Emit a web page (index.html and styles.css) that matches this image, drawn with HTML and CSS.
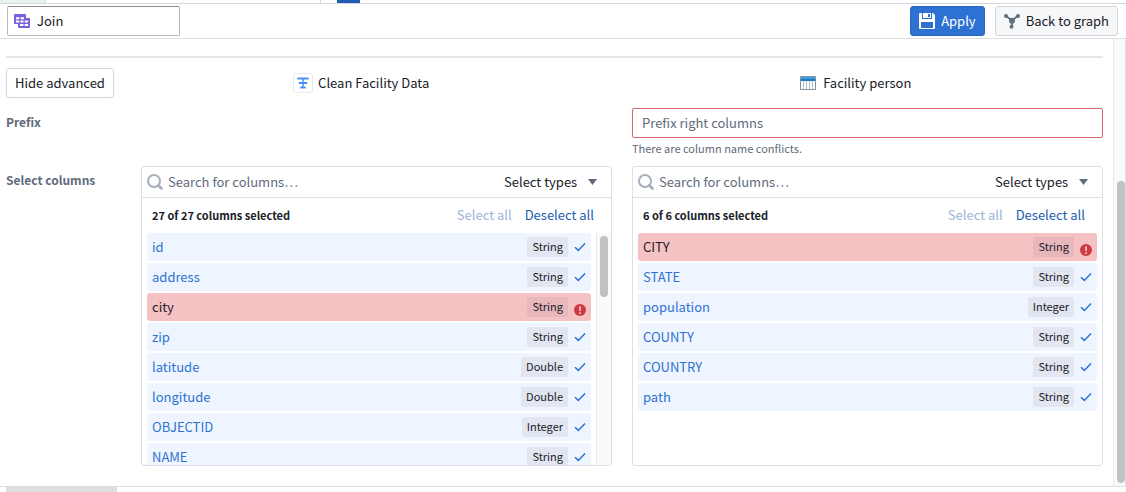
FILE: index.html
```html
<!DOCTYPE html>
<html lang="en">
<head>
<meta charset="utf-8">
<title>Join</title>
<link rel="stylesheet" href="styles.css">
</head>
<body>
<svg class="symbols" aria-hidden="true">
  <symbol id="tick" viewBox="0 0 12 10"><path d="M1 5.2 4.3 8.4 11 1.4" fill="none" stroke="currentColor" stroke-width="1.5"/></symbol>
  <symbol id="error" viewBox="0 0 12 12"><circle cx="6" cy="6" r="6" fill="#cd3b40"/><path d="M6 2.3v4.6M6 8.2v1.7" stroke="#f5c2c4" stroke-width="1.7"/></symbol>
  <symbol id="search" viewBox="0 0 16 16"><circle cx="7" cy="7" r="6" fill="none" stroke="currentColor" stroke-width="2"/><path d="m11.5 11.5 3 3" stroke="currentColor" stroke-width="2.6" stroke-linecap="round"/></symbol>
</svg>
<div class="strip"><span class="strip-tab"></span><span class="strip-line"></span><span class="strip-active"></span></div>
<header class="toolbar">
  <label class="name-box">
    <svg width="16" height="14" viewBox="0 0 16 14"><path d="M1 0h10a1 1 0 0 1 1 1v3h3a1 1 0 0 1 1 1v8a1 1 0 0 1-1 1H5a1 1 0 0 1-1-1v-3H1a1 1 0 0 1-1-1V1a1 1 0 0 1 1-1z" fill="#7961db"/><path d="M2 3.2h3.3v2H2zM6.5 3.2H10v2H6.5zM2 6.4h3.3v2H2zM6.5 6.4h3v2h-3zM10.7 6.4H14v2h-3.3zM6 9.9h3.5v2H6zM10.7 9.9H14v2h-3.3z" fill="#fff"/></svg>
    <input type="text" value="Join" aria-label="Name">
  </label>
  <button class="btn btn-primary" type="button">
    <svg width="16" height="16" viewBox="0 0 16 16"><path fill="#fff" fill-rule="evenodd" d="M1 0h2v6h10V0h1l2 2v13a1 1 0 0 1-1 1H1a1 1 0 0 1-1-1V1a1 1 0 0 1 1-1zM2 9v6h12V9zM4 0h8v5H4zM9 1v3h2V1z"/></svg>
    Apply
  </button>
  <button class="btn btn-muted" type="button">
    <svg width="16" height="16" viewBox="0 0 16 16" fill="#5c7080"><path d="m2 3 6 4.5L14 2.700M8 8v6" fill="none" stroke="#5c7080" stroke-width="1.8"/><circle cx="2" cy="3" r="2"/><circle cx="14" cy="3" r="2"/><circle cx="8" cy="7.800" r="3"/><circle cx="7.500" cy="13.800" r="2"/></svg>
    Back to graph
  </button>
</header>
<div class="viewport">
  <main class="content">
    <hr>
    <div class="sources">
      <button class="btn" type="button">Hide advanced</button>
      <div class="source">
        <span class="source-badge"><svg width="12" height="12" viewBox="0 0 12 12"><path d="M1 1.500h10M2.500 6h7M4 10.500h4" fill="none" stroke="#4a90f5" stroke-width="1.800" stroke-linecap="round"/><path d="M6 1.500v9" stroke="#4a90f5" stroke-width="1.500"/></svg></span>
        Clean Facility Data
      </div>
      <div class="source person">
        <svg width="16" height="14" viewBox="0 0 16 14"><path d="M.5.5h15v13H.5z" fill="#fff" stroke="#8a9299"/><path d="M1 1h14v2H1z" fill="#39a0e6"/><path d="M1 3h14v2H1z" fill="#1d78c4"/><path d="M3.500 5v8M6.500 5v8M9.500 5v8M12.500 5v8" stroke="#a9bfd2"/></svg>
        Facility person
      </div>
    </div>
    <div class="form">
      <label class="form-label" for="prefix">Prefix</label>
      <div class="prefix">
        <input id="prefix" type="text" placeholder="Prefix right columns">
        <p>There are column name conflicts.</p>
      </div>
      <span class="form-label">Select columns</span>
      <section class="panel">
        <div class="panel-search">
          <svg width="16" height="16"><use href="#search"/></svg>
          <input type="text" placeholder="Search for columns…" aria-label="Search left columns">
          <label class="types"><select aria-label="Left column types"><option>Select types</option></select></label>
        </div>
        <div class="panel-actions"><strong>27 of 27 columns selected</strong><button type="button" disabled>Select all</button><button type="button">Deselect all</button></div>
        <div class="list">
          <div class="rows">
            <button class="row" type="button"><span>id</span><em>String</em><svg><use href="#tick"/></svg></button>
            <button class="row" type="button"><span>address</span><em>String</em><svg><use href="#tick"/></svg></button>
            <button class="row conflict" type="button"><span>city</span><em>String</em><svg><use href="#error"/></svg></button>
            <button class="row" type="button"><span>zip</span><em>String</em><svg><use href="#tick"/></svg></button>
            <button class="row" type="button"><span>latitude</span><em>Double</em><svg><use href="#tick"/></svg></button>
            <button class="row" type="button"><span>longitude</span><em>Double</em><svg><use href="#tick"/></svg></button>
            <button class="row" type="button"><span>OBJECTID</span><em>Integer</em><svg><use href="#tick"/></svg></button>
            <button class="row" type="button"><span>NAME</span><em>String</em><svg><use href="#tick"/></svg></button>
          </div>
          <div class="list-track"><div class="thumb"></div></div>
        </div>
      </section>
      <section class="panel">
        <div class="panel-search">
          <svg width="16" height="16"><use href="#search"/></svg>
          <input type="text" placeholder="Search for columns…" aria-label="Search right columns">
          <label class="types"><select aria-label="Right column types"><option>Select types</option></select></label>
        </div>
        <div class="panel-actions"><strong>6 of 6 columns selected</strong><button type="button" disabled>Select all</button><button type="button">Deselect all</button></div>
        <div class="list">
          <div class="rows">
            <button class="row conflict" type="button"><span>CITY</span><em>String</em><svg><use href="#error"/></svg></button>
            <button class="row" type="button"><span>STATE</span><em>String</em><svg><use href="#tick"/></svg></button>
            <button class="row" type="button"><span>population</span><em>Integer</em><svg><use href="#tick"/></svg></button>
            <button class="row" type="button"><span>COUNTY</span><em>String</em><svg><use href="#tick"/></svg></button>
            <button class="row" type="button"><span>COUNTRY</span><em>String</em><svg><use href="#tick"/></svg></button>
            <button class="row" type="button"><span>path</span><em>String</em><svg><use href="#tick"/></svg></button>
          </div>
        </div>
      </section>
    </div>
  </main>
  <div class="page-track"><div class="thumb"></div></div>
</div>
<footer class="bottom"><span></span></footer>
</body>
</html>
```

FILE: styles.css
```css
* { box-sizing: border-box; }

body {
  margin: 0;
  height: 100vh;
  display: flex;
  flex-direction: column;
  overflow: hidden;
  background: #fff;
  color: #182026;
  font: 13px/18px "Noto Sans CJK SC", "Noto Sans", sans-serif;
}

button, input, select { font: inherit; color: inherit; }
button { cursor: pointer; }
svg { flex: none; display: block; }
.symbols { position: absolute; width: 0; height: 0; }

/* Edge of the pane above */
.strip { display: flex; flex: none; height: 4px; border-bottom: 1px solid #d5d8dd; }
.strip-tab { width: 46px; background: #e6f4f1; border-right: 1px solid #b9ddd5; }
.strip-line { width: 275px; border-right: 1px solid #d5d8dd; }
.strip-active { width: 23px; margin-left: 16px; background: #215db0; }

.toolbar {
  display: flex;
  flex: none;
  align-items: center;
  gap: 10px;
  height: 35px;
  padding: 0 8px 0 7px;
  border-bottom: 1px solid #dcdfe8;
}
.name-box {
  display: flex;
  align-items: center;
  gap: 7px;
  width: 173px;
  height: 30px;
  margin-right: auto;
  padding: 0 6px;
  border: 1px solid #b8b8b8;
  border-top-color: #8c8c8c;
  border-radius: 2px;
}
.name-box input { width: 100%; min-width: 0; padding: 0; border: 0; outline: 0; background: none; }

.btn {
  display: flex;
  align-items: center;
  gap: 6px;
  height: 30px;
  padding: 0 8px;
  border: 1px solid #d5d6d8;
  border-radius: 3px;
  background: #fff;
  white-space: nowrap;
}
.btn-primary { background: #2d72d2; border-color: #2767c0; color: #fff; }
.btn-muted { background: #f6f7f9; }

.viewport { display: flex; flex: 1; min-height: 0; border-right: 1px solid #dcdfe8; }
.content { flex: 1; min-width: 0; padding: 17px 10px 0 6px; overflow: hidden; }
.content hr { height: 2px; margin: 0 0 10px; border: 0; background: #e6e6e6; }

.page-track {
  display: flex;
  flex-direction: column;
  justify-content: flex-end;
  width: 12px;
  padding: 0 0 3px 3px;
  border-left: 1px solid #e8e8e8;
  background: #fafafa;
}
.thumb { border-radius: 4px; background: #c1c1c1; }
.page-track .thumb { height: 68%; }

.sources { display: flex; align-items: center; }
.source { display: flex; flex: 1; align-items: center; justify-content: center; gap: 5px; }
.person { gap: 7px; }
.source-badge {
  display: flex;
  align-items: center;
  justify-content: center;
  width: 20px;
  height: 20px;
  border: 1px solid #e8eaed;
  border-radius: 3px;
}

.form {
  display: grid;
  grid-template-columns: 115px minmax(0, 1fr) minmax(0, 1fr);
  column-gap: 20px;
  row-gap: 8px;
  margin-top: 10px;
}
.form-label { padding-top: 5px; font-size: 12px; font-weight: 700; color: #5f6b7c; }
.prefix { grid-column: 3; }
.prefix input {
  display: block;
  width: 100%;
  height: 30px;
  padding: 0 9px 2px;
  border: 1px solid #d9666a;
  border-radius: 2px;
  outline: 0;
}
.prefix p { margin: 1px 0; font-size: 11px; line-height: 18px; color: #5f6b7c; }
input::placeholder { color: #5f6b7c; opacity: 1; }

.panel { border: 1px solid #dce0e5; border-radius: 3px; overflow: hidden; }
.panel-search {
  display: flex;
  align-items: center;
  gap: 5px;
  height: 31px;
  padding: 0 14px 0 5px;
  border-bottom: 1px solid #dce0e5;
  color: #a7b0be;
}
.panel-search input { flex: 1; min-width: 0; padding: 0; border: 0; outline: 0; background: none; color: #182026; }
.types { display: flex; align-items: center; gap: 10px; color: #182026; }
.types::after { content: ""; width: 9px; height: 6px; background: #5f6b7c; clip-path: polygon(0 0, 100% 0, 50% 100%); }
.types select { appearance: none; padding: 0; border: 0; outline: 0; background: none; }

.panel-actions { display: flex; align-items: center; gap: 13px; height: 35px; padding: 0 17px 2px 10px; }
.panel-actions strong { margin-right: auto; font-size: 11px; font-weight: 700; }
.panel-actions button { padding: 0; border: 0; background: none; color: #215db0; }
.panel-actions button:disabled { color: #9db4d9; }

.list { display: flex; height: 232px; overflow: hidden; }
.rows { display: flex; flex: 1; flex-direction: column; gap: 2px; min-width: 0; padding: 0 5px; }
.row {
  display: flex;
  flex: none;
  align-items: center;
  gap: 6px;
  height: 28px;
  padding: 0 5px;
  border: 0;
  border-radius: 3px;
  background: #eff5ff;
  color: #2d72d2;
  text-align: left;
}
.row span { flex: 1; }
.row em {
  padding: 0 5px 2px;
  border-radius: 2px;
  background: #e1e6f0;
  color: #1c2127;
  font-size: 11px;
  line-height: 18px;
  font-style: normal;
}
.row svg { width: 12px; height: 10px; }
.row.conflict { background: #f5c2c4; color: #1c2127; }
.row.conflict em { background: #e8b7bc; }
.row.conflict svg { height: 12px; margin-top: 5px; }
.list-track { width: 15px; padding: 3px; border-left: 1px solid #e8e8e8; background: #fafafa; }
.list-track .thumb { width: 8px; height: 61px; }

.bottom { display: flex; flex: none; height: 6px; padding-left: 6px; border-top: 1px solid #dcdfe8; }
.bottom span { width: 111px; background: #dcdde1; }
```
